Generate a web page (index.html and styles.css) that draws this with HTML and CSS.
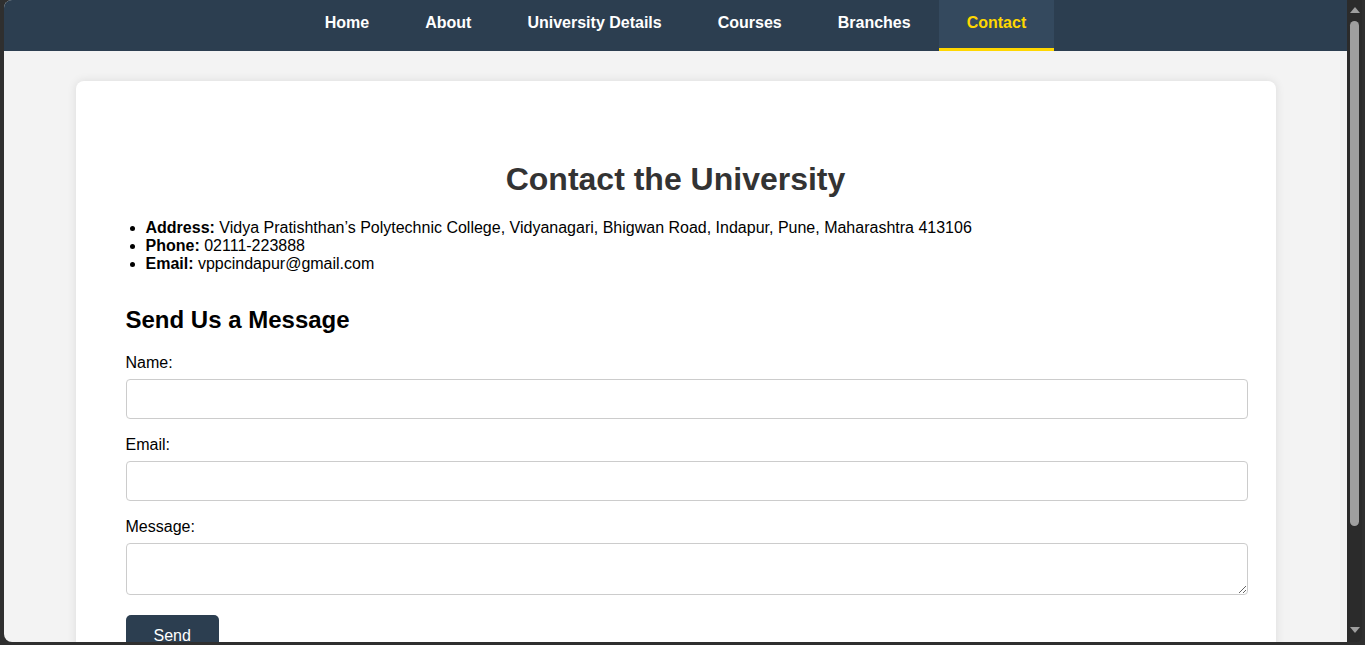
FILE: index.html
```html
<!DOCTYPE html>
<html lang="en">
<head>
<meta charset="utf-8">
<title>Contact the University</title>
<link rel="stylesheet" href="styles.css">
</head>
<body>
<div class="window">
  <div class="viewport">
    <nav class="nav">
      <a class="nav-link" href="#">Home</a>
      <a class="nav-link" href="#">About</a>
      <a class="nav-link" href="#">University Details</a>
      <a class="nav-link" href="#">Courses</a>
      <a class="nav-link" href="#">Branches</a>
      <a class="nav-link active" href="#">Contact</a>
    </nav>
    <main class="main">
      <section class="card">
        <h2 class="title">Contact the University</h2>
        <ul class="info">
          <li><strong>Address:</strong> Vidya Pratishthan’s Polytechnic College, Vidyanagari, Bhigwan Road, Indapur, Pune, Maharashtra 413106</li>
          <li><strong>Phone:</strong> 02111-223888</li>
          <li><strong>Email:</strong> vppcindapur@gmail.com</li>
        </ul>
        <h3 class="subtitle">Send Us a Message</h3>
        <form class="form">
          <label class="label" for="name">Name:</label>
          <input class="field" id="name" type="text">
          <label class="label" for="email">Email:</label>
          <input class="field" id="email" type="email">
          <label class="label" for="msg">Message:</label>
          <textarea class="field area" id="msg"></textarea>
          <button class="btn" type="button">Send</button>
        </form>
      </section>
    </main>
  </div>
  <div class="scrollbar">
    <span class="arrow up"></span>
    <span class="thumb"></span>
    <span class="spacer"></span>
    <span class="arrow down"></span>
  </div>
</div>
</body>
</html>
```

FILE: styles.css
```css
html, body {
  margin: 0;
  padding: 0;
  height: 100%;
  overflow: hidden;
}
body {
  background: #2f2f2f;
  font-family: "Liberation Sans", Arial, sans-serif;
  color: #000;
}
.window {
  display: flex;
  height: 645px;
  box-sizing: border-box;
  padding: 0 3px 3px 4px;
}
.viewport {
  flex: 1;
  overflow: hidden;
  background: #f3f3f3;
  border-radius: 8px 0 0 8px;
}
.scrollbar {
  width: 15px;
  background: #2b2b2b;
  border-radius: 0 0 6px 0;
  display: flex;
  flex-direction: column;
  align-items: center;
  padding: 7px 0 9px;
  box-sizing: border-box;
}
.arrow {
  width: 0;
  height: 0;
  border-left: 5px solid transparent;
  border-right: 5px solid transparent;
}
.arrow.up { border-bottom: 6px solid #9e9e9e; }
.arrow.down { border-top: 6px solid #9e9e9e; }
.thumb {
  width: 9px;
  height: 505px;
  margin-top: 8px;
  border-radius: 5px;
  background: #9f9f9f;
}
.spacer { flex: 1; }

.nav {
  height: 51px;
  background: #2c3e50;
  display: flex;
  justify-content: center;
}
.nav-link {
  display: block;
  box-sizing: border-box;
  height: 51px;
  padding: 14px 28px 0;
  color: #fff;
  font-weight: bold;
  font-size: 16px;
  text-decoration: none;
  border-bottom: 3px solid transparent;
}
.nav-link.active {
  background: #34495e;
  color: #ffd700;
  border-bottom-color: #ffd700;
}

.main {
  padding: 30px 0;
}
.card {
  max-width: 1200px;
  margin: 0 auto;
  box-sizing: border-box;
  padding: 50px;
  background: #fff;
  border-radius: 8px;
  box-shadow: 0 0 10px rgba(0, 0, 0, 0.1);
}
.title {
  margin: 30px 0 21px;
  text-align: center;
  font-size: 32px;
  color: #333;
}
.info {
  margin: 0;
  padding-left: 20px;
  font-size: 16px;
}
.subtitle {
  margin: 33px 0 20px;
  font-size: 24px;
}
.form {
  display: flex;
  flex-direction: column;
  align-items: flex-start;
}
.label {
  font-size: 16px;
  margin-bottom: 7px;
}
.field {
  width: 100%;
  padding: 10px;
  border: 1px solid #ccc;
  border-radius: 4px;
  font-family: "Liberation Sans", Arial, sans-serif;
  font-size: 16px;
  box-sizing: content-box;
  height: 18px;
  margin: 0 0 17px;
}
.area {
  height: 30px;
  resize: vertical;
  margin-bottom: 20px;
}
.btn {
  background: #2c3e50;
  color: #fff;
  border: none;
  border-radius: 5px;
  padding: 12px 28px;
  font-family: "Liberation Sans", Arial, sans-serif;
  font-size: 16px;
}
```
